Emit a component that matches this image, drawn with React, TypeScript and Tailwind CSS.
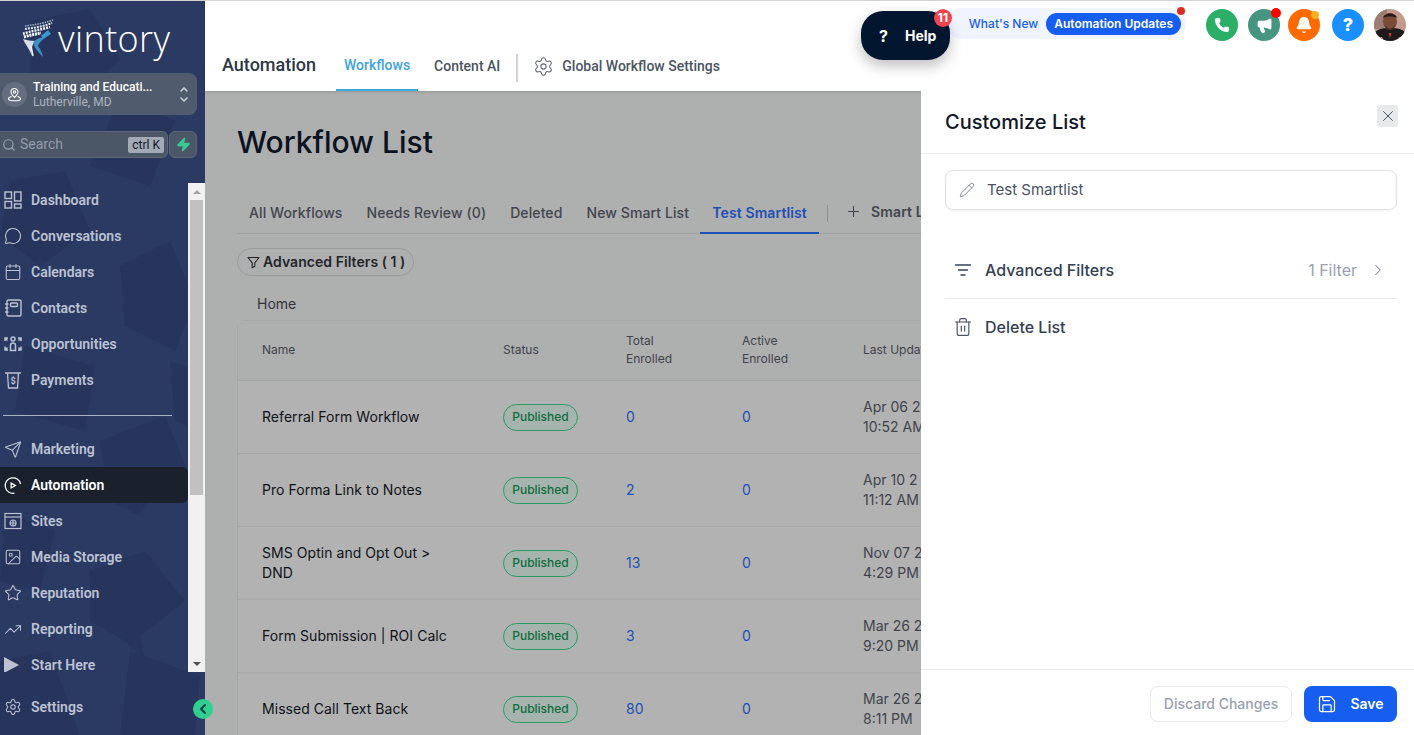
import {
  Bell,
  Calendar,
  ChevronLeft,
  ChevronRight,
  Image,
  Megaphone,
  MessageCircle,
  Pencil,
  Phone,
  Plus,
  Save,
  Search,
  Send,
  Settings,
  Star,
  Trash2,
  TrendingUp,
  X,
  Zap,
} from "lucide-react";
import type { ReactNode } from "react";

const DashboardIcon = () => (
  <svg width="18" height="18" viewBox="0 0 18 18" fill="none" stroke="currentColor" strokeWidth="1.4">
    <rect x="1" y="1" width="6.5" height="6.5" />
    <rect x="1" y="10.5" width="6.5" height="6.5" />
    <rect x="10.5" y="1" width="6.5" height="9" />
    <rect x="10.5" y="13" width="6.5" height="4" />
  </svg>
);

const ContactsIcon = () => (
  <svg width="18" height="18" viewBox="0 0 18 18" fill="none" stroke="currentColor" strokeWidth="1.4">
    <rect x="3" y="1" width="14" height="16" rx="1.5" />
    <rect x="6.5" y="4" width="7" height="3.5" rx="1" />
    <path d="M1 5h3.5M1 9h3.5M1 13h3.5" />
  </svg>
);

const OpportunitiesIcon = () => (
  <svg width="18" height="18" viewBox="0 0 18 18" fill="none" stroke="currentColor" strokeWidth="1.5">
    <circle cx="9" cy="4" r="2" />
    <path d="M6.5 15.5v-5a2.5 2.5 0 0 1 5 0v5z" />
    <path d="M1 6V3h3M17 6V3h-3M1 11.5V15h3M17 11.5V15h-3M1.5 3.5l2 2M16.5 3.5l-2 2M1.5 14.5l2-2M16.5 14.5l-2-2" />
  </svg>
);

const PaymentsIcon = () => (
  <svg width="18" height="18" viewBox="0 0 18 18" fill="none" stroke="currentColor" strokeWidth="1.3">
    <path d="M1 2h16M3.5 2l1 15h9l1-15" />
    <text x="9" y="13" textAnchor="middle" fontSize="9" fontWeight="700" fill="currentColor" stroke="none">
      $
    </text>
  </svg>
);

const AutomationIcon = () => (
  <svg width="19" height="19" viewBox="0 0 19 19" fill="none" stroke="currentColor" strokeWidth="1.3">
    <path d="M17.5 8A8.2 8.2 0 1 0 11 17.6" />
    <path d="M7.5 7l4.5 2.6-4.5 2.6z" />
  </svg>
);

const SitesIcon = () => (
  <svg width="18" height="18" viewBox="0 0 18 18" fill="none" stroke="currentColor" strokeWidth="1.2">
    <rect x="1" y="1.5" width="16" height="15" />
    <path d="M1 5h16" />
    <circle cx="9" cy="11" r="3" />
    <path d="M6 11h6M9 8v6" />
  </svg>
);

const StartIcon = () => (
  <svg width="18" height="18" viewBox="0 0 18 18" fill="currentColor" className="-ml-px">
    <path d="M0 1l15 8-15 8z" />
  </svg>
);

const LocationIcon = () => (
  <svg width="15" height="15" viewBox="0 0 15 15" fill="none" stroke="currentColor" strokeWidth="1.1">
    <path d="M7.5 10.5C5.5 8.5 4 7 4 5a3.5 3.5 0 0 1 7 0c0 2-1.5 3.5-3.5 5.5z" />
    <circle cx="7.5" cy="5" r="1.2" />
    <path d="M4.5 9.5C2.5 10 1.5 11 1.5 12c0 1 1.5 1.8 6 1.8s6-.8 6-1.8c0-1-1-2-3-2.5" />
  </svg>
);

const UpDownIcon = () => (
  <svg width="10" height="17" viewBox="0 0 10 17" fill="none" stroke="#d0d4dc" strokeWidth="1.5" strokeLinecap="round">
    <path d="M2 5l3-3 3 3M2 12l3 3 3-3" />
  </svg>
);

const FilterLinesIcon = () => (
  <svg width="18" height="18" viewBox="0 0 18 18" fill="none" stroke="currentColor" strokeWidth="1.4" strokeLinecap="round">
    <path d="M1.5 4h15M4.5 9h9M7 14h4" />
  </svg>
);

const FunnelIcon = () => (
  <svg width="13" height="13" viewBox="0 0 13 13" fill="none" stroke="currentColor" strokeWidth="1.1" strokeLinejoin="round">
    <path d="M1 1.5h11L7.8 6.8v3.4l-2.6 1.5V6.8z" />
  </svg>
);

const LogoMark = () => (
  <svg width="32" height="40" viewBox="0 0 32 40" fill="none">
    <path d="M3 7C10 6 20 5 31 1" stroke="#9fb8d0" strokeWidth="1.5" strokeDasharray="1.5 1" />
    <path d="M3 10C10 9 20 8 30 4" stroke="#e3e8f0" strokeWidth="2" strokeDasharray="2 1" />
    <path d="M1 15C8 12 18 11 28 8" stroke="#f2f4f8" strokeWidth="2.5" strokeDasharray="2 1" />
    <path d="M2 18C8 16 14 15 19 14" stroke="#ffffff" strokeWidth="3" strokeDasharray="2 .8" />
    <path d="M19 17l7-6 3 4-8 5z" fill="#3a9ad0" />
    <path d="M1 20c2 5 6 9 9 17-1-7 0-11 3-15-4 0-8-1-12-2z" fill="#d8dde6" />
    <path d="M11 24c2-4 7-6 12-5-4 3-6 5-7 8 2 3 4 6 5 11-4-4-8-8-10-14z" fill="#3a8fc4" />
    <path d="M9 27l2 10" stroke="#eef0f4" strokeWidth="1.5" />
  </svg>
);

const Avatar = () => (
  <svg width="32" height="32" viewBox="0 0 32 32" className="rounded-full">
    <rect width="32" height="32" fill="#c39a8e" />
    <rect width="13" height="20" fill="#9c7d76" />
    <path d="M0 32v-8c4-4 8-5 16-5s12 1 16 5v8z" fill="#1d1a1b" />
    <path d="M0 28h8l2 4H0zM32 28h-7l-2 4h9z" fill="#d08a80" />
    <ellipse cx="16" cy="12.5" rx="7" ry="8.5" fill="#7a4c38" />
    <path d="M9 9c1-6 13-6 14 0-3-2-11-2-14 0z" fill="#2a1b16" />
    <path d="M11 16c2 5 8 5 10 0-1 6-9 6-10 0z" fill="#2a1b16" />
    <path d="M14.5 24h3l-1.5 5z" fill="#c83b3b" />
  </svg>
);

type NavEntry = { label: string; icon: ReactNode; active?: boolean };

const navTop: NavEntry[] = [
  { label: "Dashboard", icon: <DashboardIcon /> },
  { label: "Conversations", icon: <MessageCircle size={20} strokeWidth={1.4} /> },
  { label: "Calendars", icon: <Calendar size={20} strokeWidth={1.4} /> },
  { label: "Contacts", icon: <ContactsIcon /> },
  { label: "Opportunities", icon: <OpportunitiesIcon /> },
  { label: "Payments", icon: <PaymentsIcon /> },
];

const navBottom: NavEntry[] = [
  { label: "Marketing", icon: <Send size={19} strokeWidth={1.4} /> },
  { label: "Automation", icon: <AutomationIcon />, active: true },
  { label: "Sites", icon: <SitesIcon /> },
  { label: "Media Storage", icon: <Image size={20} strokeWidth={1.4} /> },
  { label: "Reputation", icon: <Star size={20} strokeWidth={1.4} /> },
  { label: "Reporting", icon: <TrendingUp size={21} strokeWidth={1.4} /> },
  { label: "Start Here", icon: <StartIcon /> },
];

const workflows = [
  { name: "Referral Form Workflow", total: "0", date: "Apr 06 2", time: "10:52 AM" },
  { name: "Pro Forma Link to Notes", total: "2", date: "Apr 10 2", time: "11:12 AM" },
  { name: "SMS Optin and Opt Out > DND", total: "13", date: "Nov 07 2", time: "4:29 PM" },
  { name: "Form Submission | ROI Calc", total: "3", date: "Mar 26 2", time: "9:20 PM" },
  { name: "Missed Call Text Back", total: "80", date: "Mar 26 2", time: "8:11 PM" },
];

const tabs = ["All Workflows", "Needs Review (0)", "Deleted", "New Smart List"];

function NavItem({ item }: { item: NavEntry }) {
  return (
    <div
      className={`flex h-9 items-center gap-[9px] rounded-r-md pl-1 text-sm leading-[14px] font-semibold ${
        item.active ? "bg-[#1a202c] text-white" : "text-[#bcc2d2]"
      }`}
    >
      <span className="flex w-[18px] shrink-0 justify-center">{item.icon}</span>
      <span>{item.label}</span>
    </div>
  );
}

function Sidebar() {
  return (
    <aside className="relative z-10 flex h-full w-[205px] shrink-0 flex-col overflow-hidden border-t border-[#d4d4d4] bg-[#2a3a63] font-['Roboto',sans-serif]">
      <svg className="absolute inset-0" width="205" height="735" fill="#27355c">
        <path d="M30 20l60-12 30 50-40 40-50-20zM120 95l55 25-25 65-60-20zM10 180l55-10 25 60-50 35-40-30zM120 265l50-25 25 60-20 50-50-25zM25 345l70 20-10 65-70-20zM100 440l65-25 25 60-40 20-10 20-30-15zM170 360l30 10v60l-25-10zM5 510l50 20-15 60-40-10zM90 570l55-20 40 50-45 35 5 25-20-20-35-20zM130 650l70 25-5 60H120zM0 660l50-10 30 85H0z" />
      </svg>
      <div className="relative flex h-[72px] items-center pl-[22px] pt-1">
        <LogoMark />
        <span className="ml-1 font-['Open_Sans',sans-serif] text-[36px] leading-none font-light tracking-[0.4px] text-white">
          vintory
        </span>
      </div>
      <div className="relative mr-2 flex h-[42px] items-center rounded-r-lg bg-[#505b6e] pl-[2px]">
        <span className="flex h-[25px] w-[25px] items-center justify-center rounded-full bg-[#656e7e] text-white">
          <LocationIcon />
        </span>
        <div className="ml-[6px] flex-1 pt-[2px] text-xs leading-[15px] font-medium">
          <div className="text-white">Training and Educati...</div>
          <div className="font-normal text-[#aeb4bf]">Lutherville, MD</div>
        </div>
        <span className="mr-2">
          <UpDownIcon />
        </span>
      </div>
      <div className="relative mt-4 mr-2 flex h-[27px] gap-px">
        <div className="flex flex-1 items-center rounded-r-md border border-l-0 border-[#5d6779] bg-[#4b5667] pr-[3px] pl-[2px]">
          <Search size={14} className="text-[#9aa2b0]" />
          <span className="ml-1 -mt-px flex-1 text-sm text-[#929bab]">Search</span>
          <span className="rounded-[2px] bg-[#a4a9b6] px-1 text-xs leading-4 text-[#111827]">ctrl K</span>
        </div>
        <div className="flex w-[28px] items-center justify-center rounded-md border border-[#5d6779] bg-[#4b5667]">
          <Zap size={15} fill="#37ca93" className="text-[#37ca93]" />
        </div>
      </div>

      <div className="relative mt-[25px] flex h-[489px] overflow-hidden">
        <nav className="-mt-px w-[188px] shrink-0">
          {navTop.map((item) => (
            <NavItem key={item.label} item={item} />
          ))}
          <div className="mt-[17px] mb-[15px] ml-[3px] h-px w-[169px] bg-[#aab1c4]" />
          {navBottom.map((item) => (
            <NavItem key={item.label} item={item} />
          ))}
        </nav>
        <div className="flex w-[17px] flex-col items-center bg-[#f1f1f1]">
          <div className="flex h-[17px] items-center justify-center">
            <div className="h-0 w-0 border-x-[4px] border-b-[4px] border-x-transparent border-b-[#a3a3a3]" />
          </div>
          <div className="h-[295px] w-[13px] bg-[#c1c1c1]" />
          <div className="flex-1" />
          <div className="flex h-[17px] items-center justify-center">
            <div className="h-0 w-0 border-x-[4px] border-t-[4px] border-x-transparent border-t-[#505050]" />
          </div>
        </div>
      </div>
      <div className="relative mt-[17px]">
        <NavItem item={{ label: "Settings", icon: <Settings size={20} strokeWidth={1.4} /> }} />
      </div>
    </aside>
  );
}

function Header() {
  return (
    <header className="relative z-10 flex h-[91px] shrink-0 items-start border-t border-[#d4d4d4] bg-white pr-2 shadow-[0_1px_3px_rgba(0,0,0,0.15)] font-['Roboto',sans-serif]">
      <div className="flex h-full flex-1 items-end pl-[17px]">
        <span className="mb-[14px] text-[18px] leading-6 font-medium text-[#2d3748]">Automation</span>
        <div className="ml-[20px] flex h-[37px] w-[82px] justify-center border-b-2 border-[#3ba5e0] text-sm leading-[22px] font-medium text-[#3fa4e0]">
          Workflows
        </div>
        <span className="mb-[14px] ml-4 text-sm leading-[22px] font-medium text-[#4b5563]">Content AI</span>
        <div className="mb-[9px] ml-4 h-[28px] w-[2px] bg-[#d1d5db]" />
        <Settings size={21} strokeWidth={1.2} className="mb-[14px] ml-[15px] text-[#5f6673]" />
        <span className="mb-[14px] ml-2 text-sm leading-[22px] font-medium text-[#4b5563]">
          Global Workflow Settings
        </span>
      </div>
      <div className="mt-[8px] flex items-center font-['Inter',sans-serif]">
        <div className="relative mr-5 -mt-[3px] flex h-[31px] items-center rounded-full bg-[#eff4ff] pr-[5px] pl-[23px]">
          <span className="text-xs font-medium text-[#155eef]">What's New</span>
          <span className="ml-2 rounded-full bg-[#155eef] px-2 text-xs leading-[22px] font-semibold text-white">
            Automation Updates
          </span>
          <span className="absolute -top-[1px] right-[1px] h-2 w-2 rounded-full bg-[#d92d20]" />
        </div>
        <div className="flex items-center gap-2">
          <span className="mr-[2px] flex h-8 w-8 items-center justify-center rounded-full bg-[#2bae66] text-white">
            <Phone size={16} fill="white" strokeWidth={1} />
          </span>
          <span className="relative flex h-8 w-8 items-center justify-center rounded-full bg-[#46957f] text-white">
            <Megaphone size={17} fill="white" strokeWidth={1.5} />
            <span className="absolute -top-px -right-px h-[10px] w-[10px] rounded-full bg-[#ff0000]" />
          </span>
          <span className="relative flex h-8 w-8 items-center justify-center rounded-full bg-[#ff6a00] text-white">
            <Bell size={18} fill="white" strokeWidth={1.5} />
            <span className="absolute top-[2px] right-[1px] h-[8px] w-[8px] rounded-full bg-[#ffb020]" />
          </span>
          <span className="ml-[4px] flex h-8 w-8 items-center justify-center rounded-full bg-[#1a8fff] text-lg font-extrabold text-white">
            ?
          </span>
          <span className="ml-[2px] h-8 w-8">
            <Avatar />
          </span>
        </div>
      </div>
    </header>
  );
}

function WorkflowTable() {
  return (
    <div className="mt-[6px] w-[760px] rounded-t-lg border border-[#a6a8a8] bg-[#b2b2b2] font-['Inter',sans-serif]">
      <div className="grid h-[60px] grid-cols-[241px_123px_116px_121px_1fr] items-center border-b border-[#a6a8a8] bg-[#aeafaf] pb-[2px] pl-6 text-xs leading-[18px] text-[#3f444c]">
        <span>Name</span>
        <span>Status</span>
        <span>
          Total
          <br />
          Enrolled
        </span>
        <span>
          Active
          <br />
          Enrolled
        </span>
        <span className="whitespace-nowrap">Last Updated</span>
      </div>
      {workflows.map((w) => (
        <div
          key={w.name}
          className="grid h-[73px] grid-cols-[241px_123px_116px_121px_1fr] items-center border-b border-[#a6a8a8] pl-6 text-sm"
        >
          <span className="w-[192px] leading-5 tracking-[0.05px] text-[#0f1319]">{w.name}</span>
          <span className="flex h-[27px] w-[75px] items-center justify-center rounded-full border border-[#2d9a63] bg-[#a5b4ac] text-xs font-medium text-[#116b3f]">
            Published
          </span>
          <span className="text-[#1f4fb4]">{w.total}</span>
          <span className="text-[#1f4fb4]">0</span>
          <span className="leading-5 whitespace-nowrap text-[#3f444c]">
            {w.date}
            <br />
            {w.time}
          </span>
        </div>
      ))}
    </div>
  );
}

function CustomizePanel() {
  return (
    <section className="absolute top-0 right-0 bottom-0 z-20 flex w-[493px] flex-col bg-white font-['Inter',sans-serif]">
      <div className="flex h-[63px] items-start justify-between border-b border-[#eaecf0] pr-4 pl-6">
        <h2 className="mt-[18px] text-xl leading-[26px] font-medium text-[#101828]">Customize List</h2>
        <button className="mt-[14px] flex h-[22px] w-[21px] items-center justify-center rounded-[3px] bg-[#e8e9eb] text-[#475467]">
          <X size={18} strokeWidth={1.3} />
        </button>
      </div>
      <div className="flex-1 pr-[17px] pl-6">
        <div className="mt-4 flex h-10 items-center gap-[12px] rounded-lg border border-[#e0e2e7] pl-[13px] text-[15px] text-[#475467] shadow-[0_1px_2px_rgba(16,24,40,0.05)]">
          <Pencil size={16} strokeWidth={1.2} className="text-[#667085]" />
          <span>Test Smartlist</span>
        </div>
        <div className="mt-[40px] flex h-[49px] items-center border-b border-[#eaecf0] pr-[10px] pl-[9px] pb-[9px] text-base font-medium text-[#344054]">
          <FilterLinesIcon />
          <span className="ml-[13px] flex-1">Advanced Filters</span>
          <span className="font-normal text-[#98a2b3]">1 Filter</span>
          <ChevronRight size={18} strokeWidth={1.4} className="ml-[12px] text-[#7b8698]" />
        </div>
        <div className="mt-[7px] flex h-[41px] items-center pl-[8px] text-base font-medium text-[#344054]">
          <Trash2 size={20} strokeWidth={1.4} className="text-[#475467]" />
          <span className="ml-[12px]">Delete List</span>
        </div>
      </div>
      <div className="flex h-[66px] items-start justify-end gap-3 border-t border-[#eaecf0] pt-4 pr-[17px]">
        <button className="h-9 w-[142px] rounded-lg border border-[#eaecf0] text-sm font-medium text-[#98a2b3]">
          Discard Changes
        </button>
        <button className="flex h-9 w-[93px] items-center justify-center gap-[13px] rounded-lg bg-[#155eef] text-sm font-semibold text-white">
          <Save size={20} strokeWidth={1.5} />
          Save
        </button>
      </div>
    </section>
  );
}

export default function App() {
  return (
    <div className="relative flex h-[735px] w-[1414px] overflow-hidden bg-[#f9fafb]">
      <Sidebar />
      <main className="flex min-w-0 flex-1 flex-col">
        <Header />
        <div className="relative flex-1 overflow-hidden bg-[#aeafaf] pl-8 font-['Inter',sans-serif]">
          <h1 className="mt-[31px] text-[30px] leading-10 font-medium text-[#0b1220]">Workflow List</h1>
          <div className="mt-[29px] flex h-[43px] w-[720px] items-end border-b border-[#a0a2a2] pl-3 text-sm font-medium tracking-[0.1px] whitespace-nowrap text-[#41464e]">
            <div className="flex h-[41px] items-center gap-6">
              {tabs.map((t) => (
                <span key={t}>{t}</span>
              ))}
            </div>
            <div className="relative -mb-px ml-[11px] flex h-[41px] w-[119px] shrink-0 items-center justify-center border-b-2 border-[#1f4fb4] font-semibold text-[#1f4fb4]">
              Test Smartlist
            </div>
            <div className="mb-[11px] ml-2 h-[17px] w-px bg-[#8b8e8e]" />
            <Plus size={17} strokeWidth={1.5} className="mb-[13px] ml-[17px] shrink-0 text-[#41464e]" />
            <span className="mb-[11px] ml-[9px] font-semibold">Smart List</span>
          </div>
          <button className="mt-[14px] flex h-7 w-[177px] items-center gap-[3px] rounded-full border border-[#9a9c9c] pl-[9px] text-sm font-semibold tracking-[0.05px] text-[#22262c]">
            <FunnelIcon />
            Advanced Filters ( 1 )
          </button>
          <div className="mt-[18px] pl-5 text-sm leading-5 text-[#30343a]">Home</div>
          <WorkflowTable />
          <CustomizePanel />
        </div>
      </main>

      <div className="absolute top-[11px] left-[861px] z-30 flex h-[49px] w-[89px] items-center rounded-[22px] bg-[#03162f] pl-[18px] font-['Inter',sans-serif] text-sm font-bold text-white shadow-[0_6px_14px_rgba(0,0,0,0.25)]">
        <span className="text-base">?</span>
        <span className="ml-[17px]">Help</span>
        <span className="absolute -top-[2px] -right-[2px] flex h-[18px] w-[18px] items-center justify-center rounded-full bg-[#f0444f] text-xs font-bold text-white">
          11
        </span>
      </div>
      <button className="absolute top-[699px] left-[193px] z-30 flex h-5 w-5 items-center justify-center rounded-full bg-[#2fd08f] text-[#1b3a4a]">
        <ChevronLeft size={16} strokeWidth={3} />
      </button>
    </div>
  );
}
